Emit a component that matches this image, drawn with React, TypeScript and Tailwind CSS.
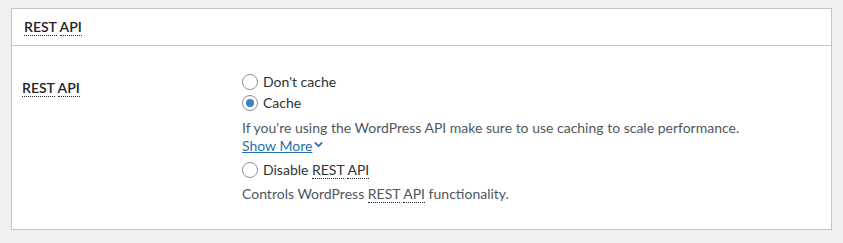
import { ChevronDown } from "lucide-react";

const Abbr = ({ children }: { children: React.ReactNode }) => (
  <abbr className="no-underline border-b border-dotted border-[#1d2327]" title="">
    {children}
  </abbr>
);

const Radio = ({ checked, label }: { checked?: boolean; label: React.ReactNode }) => (
  <label className="flex items-center h-[21px] gap-[5px] text-[14px] text-[#2c3338]">
    <span className="w-4 h-4 rounded-full border border-[#8c8f94] bg-white flex items-center justify-center">
      {checked && <span className="w-2 h-2 rounded-full bg-[#3582c4]" />}
    </span>
    <span>{label}</span>
  </label>
);

export default function App() {
  return (
    <div className="w-[843px] h-[243px] bg-[#f0f0f1] pt-[8px] pl-[11px] font-['Segoe_UI','Lato',sans-serif]">
      <div className="w-[821px] h-[222px] border border-[#c3c4c7] bg-white">
        <div className="h-[37px] border-b border-[#c3c4c7] pl-3 flex items-center">
          <h2 className="text-[14px] font-semibold text-[#1d2327] leading-none">
            <Abbr>REST</Abbr> <Abbr>API</Abbr>
          </h2>
        </div>
        <div className="flex pl-[10px] pt-[25px]">
          <div className="w-[220px] pt-[4px]">
            <span className="text-[14px] font-semibold text-[#1d2327]">
              <Abbr>REST</Abbr> <Abbr>API</Abbr>
            </span>
          </div>
          <div className="flex flex-col">
            <Radio label="Don't cache" />
            <Radio checked label="Cache" />
            <p className="mt-[4px] text-[14px] leading-[21px] text-[#50575e]">
              If you're using the WordPress API make sure to use caching to scale performance.
            </p>
            <a className="-mt-[1px] text-[14px] leading-[18px] text-[#2271b1] underline flex items-center w-fit">
              Show More
              <ChevronDown className="w-[13px] h-[13px] -mt-[3px]" strokeWidth={3} />
            </a>
            <div className="mt-[4px]">
              <Radio label={<><span>Disable </span><Abbr>REST</Abbr> <Abbr>API</Abbr></>} />
            </div>
            <p className="mt-[3px] text-[14px] leading-[21px] text-[#50575e]">
              Controls WordPress <Abbr>REST</Abbr> <Abbr>API</Abbr> functionality.
            </p>
          </div>
        </div>
      </div>
    </div>
  );
}
